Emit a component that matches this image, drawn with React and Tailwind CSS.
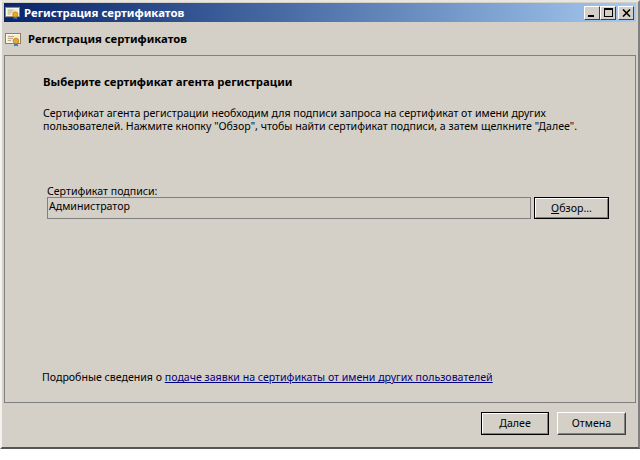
const font = { fontFamily: '"Noto Sans", Tahoma, sans-serif' };

function CertIcon({ size = 16 }) {
  return (
    <svg width={size} height={size} viewBox="0 0 16 16" className="shrink-0">
      <rect x="0.5" y="2.5" width="15" height="10" fill="#fbf8ea" stroke="#8d7f62" />
      <rect x="2" y="4" width="12" height="7" fill="#f3eccf" />
      <path d="M3 5.5h6M3 7.5h5M3 9.5h3" stroke="#b9ab8a" strokeWidth="1" />
      <path d="M9.5 11l-0.5 4.5 2-1 2 1-0.5-4.5z" fill="#2f6fc4" />
      <circle cx="11" cy="10" r="2.8" fill="#e6a82a" stroke="#b9781a" strokeWidth="0.7" />
    </svg>
  );
}

function CapBtn({ children }) {
  return (
    <div className="w-4 h-[14px] bg-[#d4d0c8] flex items-center justify-center border border-t-white border-l-white border-r-[#404040] border-b-[#404040]">
      {children}
    </div>
  );
}

function Btn({ children, def, w, h }) {
  const outer = def ? "border-black" : "border-t-white border-l-white border-r-[#404040] border-b-[#404040]";
  const inner = def
    ? "border-t-white border-l-white border-r-[#808080] border-b-[#808080]"
    : "border-t-[#d4d0c8] border-l-[#d4d0c8] border-r-[#808080] border-b-[#808080]";
  return (
    <div className={`${w} ${h} bg-[#d4d0c8] flex items-center justify-center text-[10.6px] text-black border ${outer}`}>
      <div className={`w-full h-full flex items-center justify-center border ${inner}`}>
        {children}
      </div>
    </div>
  );
}

export default function App() {
  return (
    <div className="w-[640px] h-[460px] bg-white" style={font}>
      <div className="w-[640px] h-[449px] bg-[#d4d0c8] flex flex-col border-2 border-t-[#e8e6e0] border-l-[#f4f2ee] border-r-[#808080] border-b-[#555555] pt-px px-0.5">
        <div className="h-[19px] shrink-0 flex items-center justify-between pl-px pr-0.5 bg-gradient-to-r from-[#0a246a] to-[#a6caf0]">
          <div className="flex items-center gap-[4px]">
            <CertIcon size={15} />
            <span className="text-[11.4px] font-bold text-white leading-none">Регистрация сертификатов</span>
          </div>
          <div className="flex items-center">
            <CapBtn>
              <div className="w-[6px] h-0.5 bg-black mt-[7px] -ml-0.5" />
            </CapBtn>
            <CapBtn>
              <div className="w-[9px] h-[9px] border border-black border-t-2" />
            </CapBtn>
            <div className="ml-0.5">
              <CapBtn>
                <svg width="9" height="8" viewBox="0 0 9 8">
                  <path d="M1 0.5L8 7.5M8 0.5L1 7.5" stroke="#000" strokeWidth="1.6" />
                </svg>
              </CapBtn>
            </div>
          </div>
        </div>

        <div className="h-[33px] shrink-0 flex items-center gap-[7px] pl-px pt-px">
          <CertIcon size={16} />
          <span className="text-[11.3px] font-bold text-black">Регистрация сертификатов</span>
        </div>

        <div className="h-[348px] shrink-0 border border-[#808080] flex flex-col pl-[38px] pr-[26px] pt-[19px] text-[10.6px] text-black leading-[13px]">
          <div className="font-bold text-[11.35px]">Выберите сертификат агента регистрации</div>
          <div className="mt-[19px] whitespace-nowrap">
            <div>Сертификат агента регистрации необходим для подписи запроса на сертификат от имени других</div>
            <div>пользователей. Нажмите кнопку "Обзор", чтобы найти сертификат подписи, а затем щелкните "Далее".</div>
          </div>
          <div className="mt-[52px] pl-1 h-3">Сертификат подписи:</div>
          <div className="pl-1 flex items-start gap-[3px]">
            <div className="w-[484px] h-[22px] border border-[#808080] pl-px pt-0.5">Администратор</div>
            <Btn def w="w-[75px]" h="h-[22px]">
              <span><span className="underline">О</span>бзор...</span>
            </Btn>
          </div>
          <div className="mt-[152px] -ml-px whitespace-nowrap">
            Подробные сведения о{" "}
            <span className="text-[#000080] underline">подаче заявки на сертификаты от имени других пользователей</span>
          </div>
        </div>

        <div className="flex-1 flex items-start justify-end gap-[8px] pt-[9px] pr-[10px]">
          <Btn def w="w-[68px]" h="h-[23px]">
            <span><span className="underline">Д</span>алее</span>
          </Btn>
          <Btn w="w-[69px]" h="h-[23px]">Отмена</Btn>
        </div>
      </div>
    </div>
  );
}
